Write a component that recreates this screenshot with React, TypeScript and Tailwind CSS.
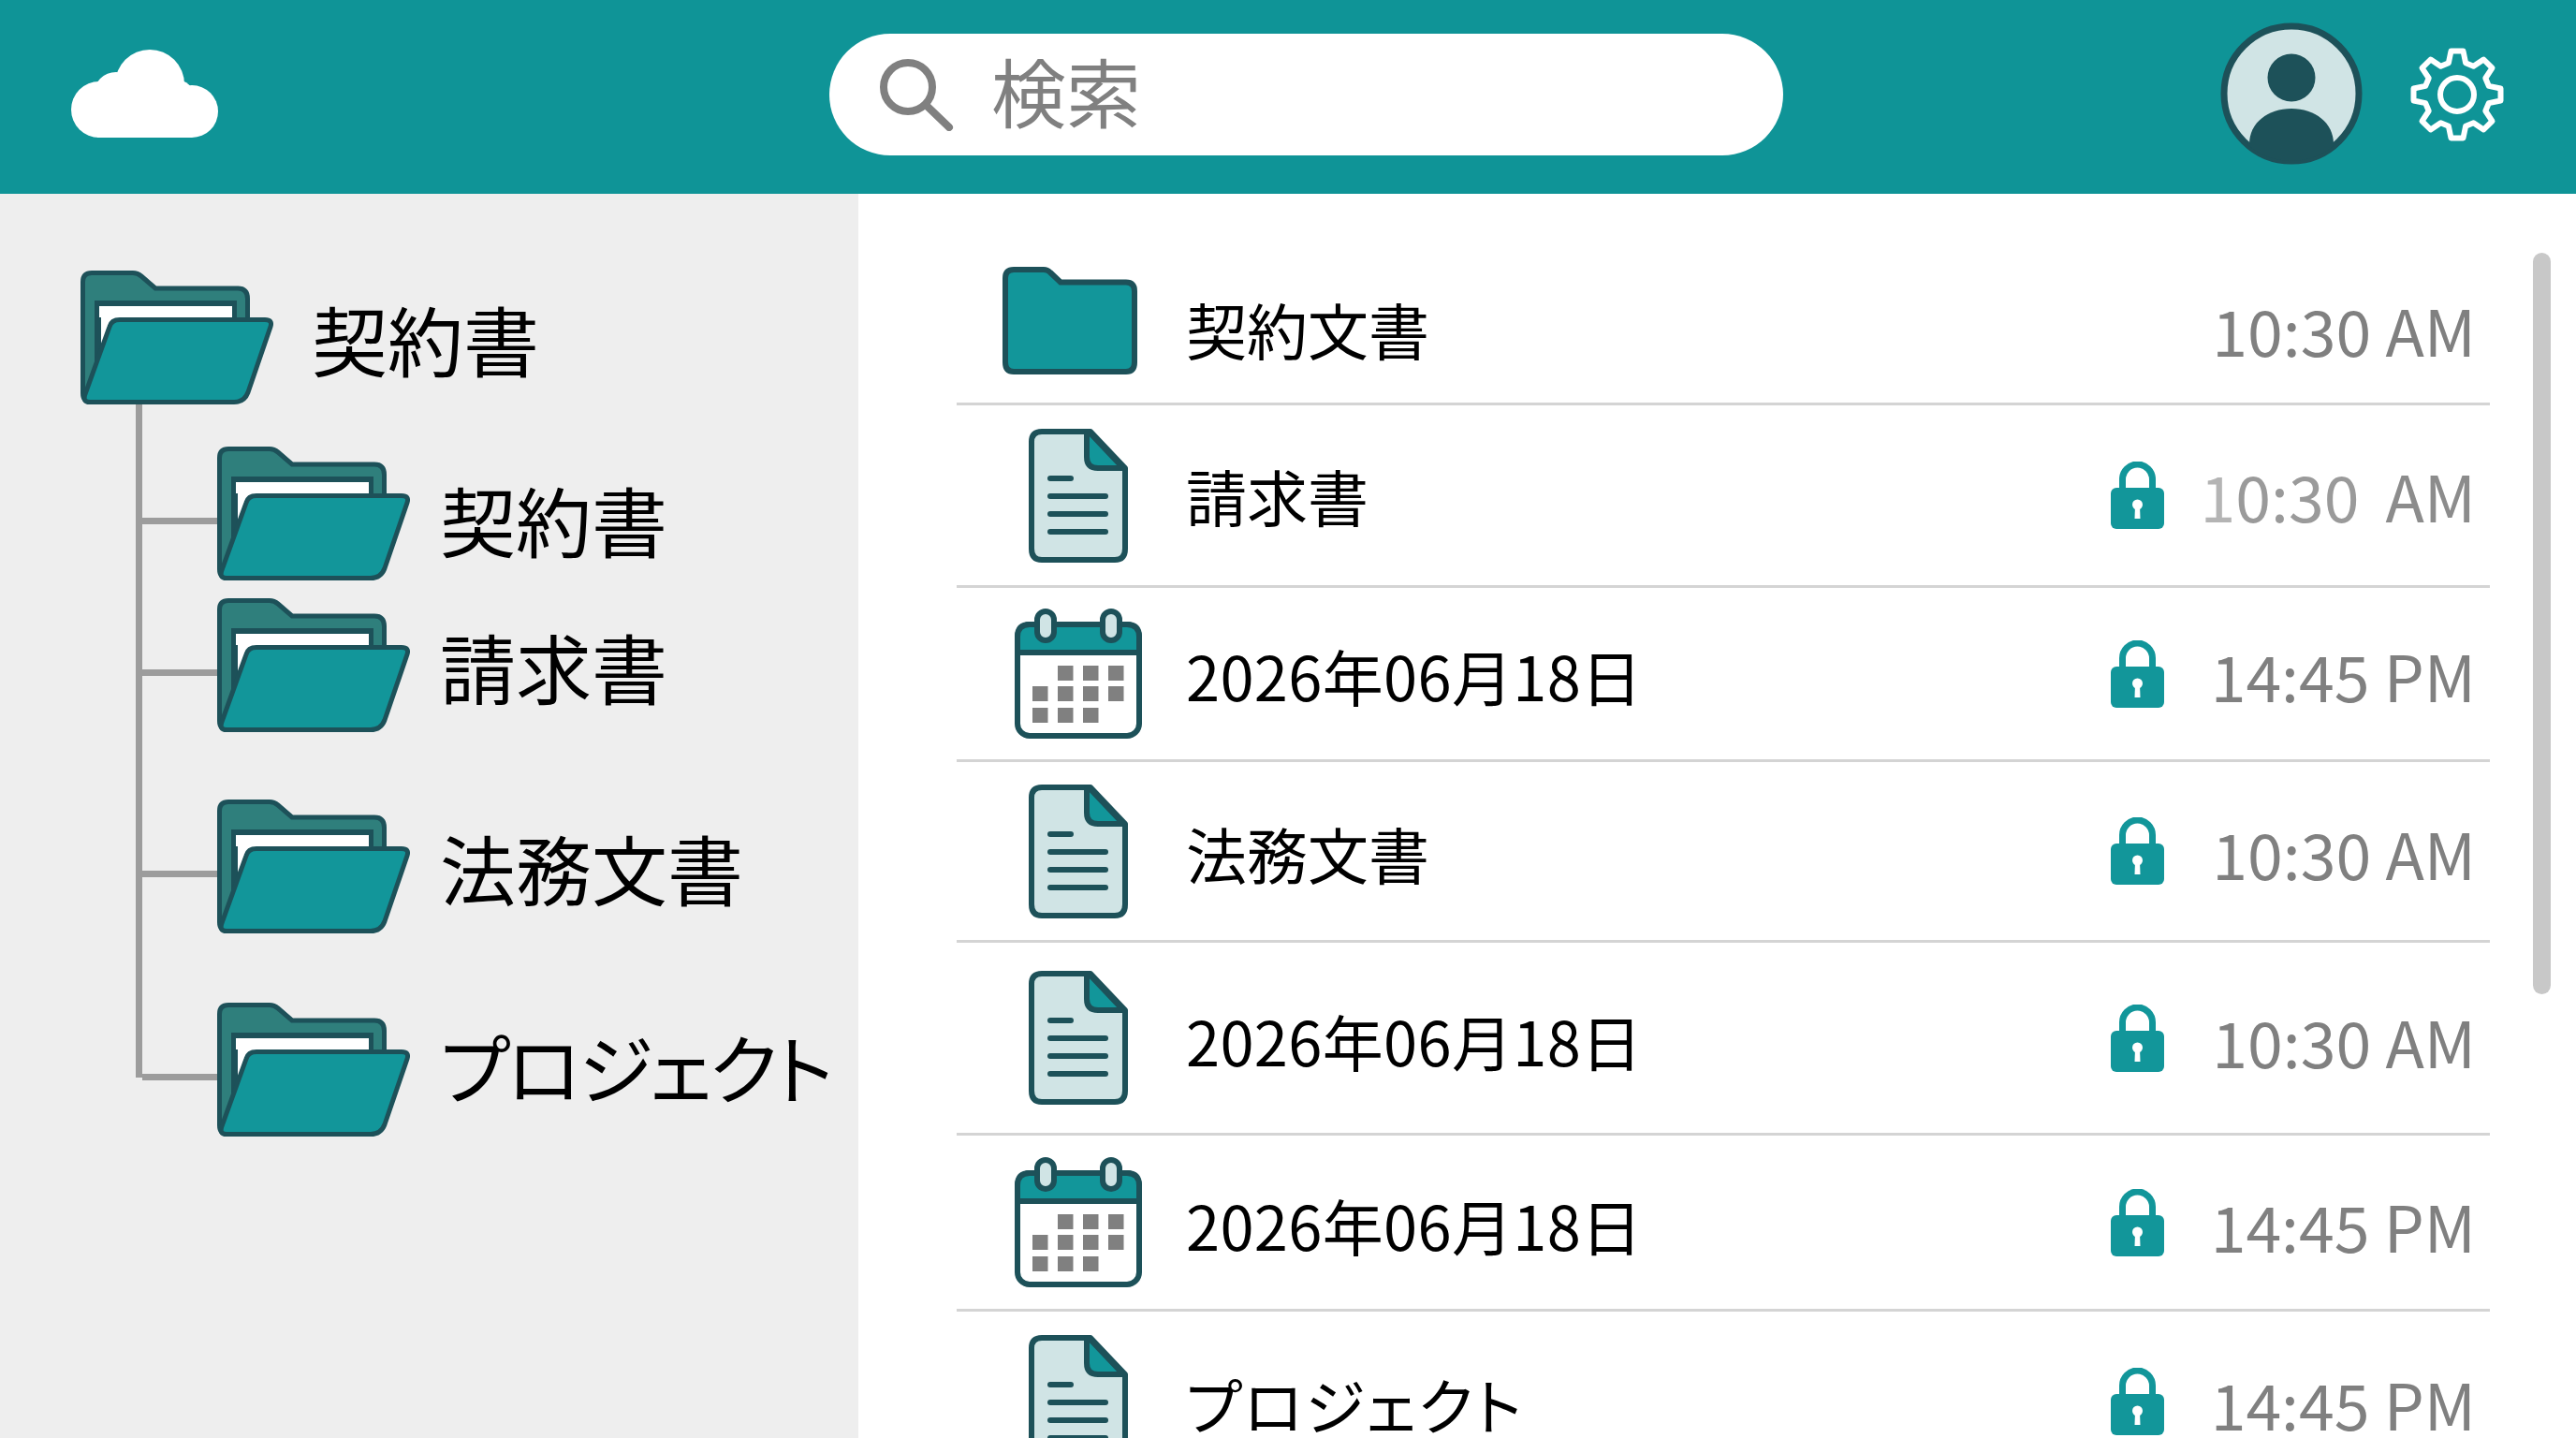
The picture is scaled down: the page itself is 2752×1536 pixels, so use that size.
import { ReactNode } from 'react';

const dark = '#1d5159';
const teal = '#12969a';
const pale = '#d0e4e5';

function gearPath() {
  const pts: string[] = [];
  const at = (deg: number, r: number) => {
    const a = (deg * Math.PI) / 180;
    return `${(50 + r * Math.cos(a)).toFixed(1)} ${(50 + r * Math.sin(a)).toFixed(1)}`;
  };
  for (let i = 0; i < 8; i++) {
    const c = i * 45;
    pts.push(at(c - 15, 35), at(c - 8, 47), at(c + 8, 47), at(c + 15, 35));
  }
  return `M${pts.join('L')}Z`;
}

function CloudLogo() {
  return (
    <svg width="157" height="94" viewBox="0 0 157 94" fill="#fff">
      <rect x="28" y="60" width="101" height="34" />
      <circle cx="30" cy="64" r="30" />
      <circle cx="129" cy="66" r="28" />
      <circle cx="84" cy="37" r="37" />
      <circle cx="48" cy="48" r="24" />
      <circle cx="112" cy="52" r="20" />
    </svg>
  );
}

function SearchGlyph() {
  return (
    <svg width="80" height="78" viewBox="0 0 80 78" fill="none" stroke="#808080" strokeWidth="8" strokeLinecap="round">
      <circle cx="31" cy="31" r="26" />
      <path d="M50 50L75 74" />
    </svg>
  );
}

function Avatar() {
  return (
    <svg width="152" height="152" viewBox="0 0 152 152">
      <defs>
        <clipPath id="avatar-clip">
          <circle cx="76" cy="76" r="72" />
        </clipPath>
      </defs>
      <circle cx="76" cy="76" r="72" fill={pale} stroke={dark} strokeWidth="7" />
      <circle cx="76" cy="59" r="25.5" fill={dark} />
      <g clipPath="url(#avatar-clip)">
        <path d="M31 152V130C31 107 51 92 76 92S121 107 121 130V152Z" fill={dark} />
        <path d="M20 122L34 134V152H20ZM132 122L118 134V152H132Z" fill={dark} />
      </g>
    </svg>
  );
}

function Gear() {
  return (
    <svg width="100" height="100" viewBox="0 0 100 100" fill="none" stroke="#fff" strokeWidth="6" strokeLinejoin="round">
      <path d={gearPath()} />
      <circle cx="50" cy="50" r="18" />
    </svg>
  );
}

function OpenFolder() {
  return (
    <svg width="206" height="143" viewBox="0 0 206 143" className="shrink-0">
      <path d="M2.5 12Q2.5 2.5 12 2.5H56Q61 2.5 65 6L80 19H168Q178.5 19 178.5 30V60H40L20 140.5H12Q2.5 140.5 2.5 131Z" fill="#2f7f7c" stroke={dark} strokeWidth="5" />
      <rect x="15" y="32" width="152" height="60" fill={dark} />
      <rect x="20" y="38" width="142" height="60" fill="#fff" />
      <path d="M15 50V120L22 100V50Z" fill={dark} />
      <path d="M42 52.5H197Q205.5 52.5 203 60L179 130Q175 140.5 164 140.5H10Q2 140.5 5 132L31 60Q33 52.5 42 52.5Z" fill={teal} stroke={dark} strokeWidth="5" strokeLinejoin="round" />
    </svg>
  );
}

function ClosedFolder() {
  return (
    <svg width="144" height="115" viewBox="0 0 144 115" className="-ml-[18px]">
      <path d="M3 12Q3 3 12 3H44Q48 3 51 6L62 16.5H132Q141 16.5 141 26V102Q141 112 132 112H12Q3 112 3 102Z" fill={teal} stroke={dark} strokeWidth="6" />
    </svg>
  );
}

function DocIcon() {
  return (
    <svg width="106" height="143" viewBox="0 0 106 143">
      <path d="M14 3H66L103 42V128Q103 140 92 140H14Q3 140 3 128V14Q3 3 14 3Z" fill={pale} stroke={dark} strokeWidth="6" strokeLinejoin="round" />
      <path d="M62 5V30Q62 42 74 42H101L66 5Z" fill={teal} stroke={dark} strokeWidth="6" strokeLinejoin="round" />
      <g stroke={dark} strokeWidth="6" strokeLinecap="round">
        <path d="M23 53H45" />
        <path d="M23 72H82" />
        <path d="M23 91H82" />
        <path d="M23 110H82" />
      </g>
    </svg>
  );
}

function CalendarIcon() {
  const cells = [
    [46, 61], [73, 61], [100, 61],
    [19, 83], [46, 83], [73, 83], [100, 83],
    [19, 106], [46, 106], [73, 106],
  ];
  return (
    <svg width="136" height="139" viewBox="0 0 136 139">
      <rect x="3" y="17" width="130" height="119" rx="13" fill="#fff" stroke={dark} strokeWidth="6" />
      <path d="M3 47V30Q3 17 16 17H120Q133 17 133 30V47Z" fill={teal} stroke={dark} strokeWidth="6" />
      <rect x="24" y="3" width="18" height="31" rx="9" fill={pale} stroke={dark} strokeWidth="6" />
      <rect x="94" y="3" width="18" height="31" rx="9" fill={pale} stroke={dark} strokeWidth="6" />
      {cells.map(([x, y]) => (
        <rect key={`${x}-${y}`} x={x} y={y} width="16.5" height="16" fill="#808080" />
      ))}
    </svg>
  );
}

function Lock() {
  return (
    <svg width="57" height="72" viewBox="0 0 57 72" className="shrink-0">
      <path d="M12.5 32V19A16 16 0 0 1 44.5 19V32" fill="none" stroke={teal} strokeWidth="7" />
      <rect x="0" y="28" width="57" height="44" rx="6" fill={teal} />
      <circle cx="28.5" cy="46" r="5.5" fill="#fff" />
      <path d="M26 47H31L31.5 61H25.5Z" fill="#fff" />
    </svg>
  );
}

function TreeNode({ label, className, labelClass }: { label: string; className: string; labelClass: string }) {
  return (
    <div className={`flex items-center ${className}`}>
      <div className="mt-[16px] h-[7px] w-[80px] shrink-0 bg-[#9c9c9c]" />
      <OpenFolder />
      <span className={`ml-[32px] whitespace-nowrap text-[81px] leading-none text-black [font-feature-settings:'palt'] ${labelClass}`}>{label}</span>
    </div>
  );
}

type RowData = {
  icon: ReactNode;
  label: string;
  time: ReactNode;
  locked: boolean;
  height: string;
  labelClass: string;
  nudge: string;
};

const rows: RowData[] = [
  { icon: <ClosedFolder />, label: '契約文書', time: '10:30 AM', locked: false, height: 'h-[178px]', labelClass: '', nudge: 'pt-[18px]' },
  {
    icon: <DocIcon />,
    label: '請求書',
    time: (
      <>
        <span className="text-[#b4b4b4]">1</span>
        <span className="text-[#9a9a9a]">0:30</span>
        <span className="ml-[28px] text-[#8c8c8c]">AM</span>
      </>
    ),
    locked: true,
    height: 'h-[195px]',
    labelClass: '',
    nudge: '',
  },
  { icon: <CalendarIcon />, label: '2026年06月18日', time: '14:45 PM', locked: true, height: 'h-[186px]', labelClass: 'tracking-[0.35px]', nudge: 'pt-[3px]' },
  { icon: <DocIcon />, label: '法務文書', time: '10:30 AM', locked: true, height: 'h-[193px]', labelClass: '', nudge: 'pt-[4px]' },
  { icon: <DocIcon />, label: '2026年06月18日', time: '10:30 AM', locked: true, height: 'h-[206px]', labelClass: 'tracking-[0.35px]', nudge: 'pt-[6px]' },
  { icon: <CalendarIcon />, label: '2026年06月18日', time: '14:45 PM', locked: true, height: 'h-[188px]', labelClass: 'tracking-[0.35px]', nudge: 'pt-[6px]' },
  { icon: <DocIcon />, label: 'プロジェクト', time: '14:45 PM', locked: true, height: 'h-[195px]', labelClass: 'tracking-[2px]', nudge: 'pt-[4px]' },
];

export default function App() {
  return (
    <div className="flex h-screen w-screen flex-col overflow-hidden bg-white font-['Noto_Sans_CJK_JP',sans-serif]">
      {/* Header */}
      <header className="flex h-[207px] shrink-0 items-center bg-[#0f9497] pb-[5px] pl-[76px]">
        <div className="mb-[3px]">
          <CloudLogo />
        </div>
        <div className="ml-[653px] flex h-[130px] w-[1019px] items-center rounded-full bg-white pl-[53px]">
          <SearchGlyph />
          <span className="mb-[12px] ml-[40px] text-[80px] leading-none text-[#808080]">検索</span>
        </div>
        <div className="mb-[2px] ml-[467px]">
          <Avatar />
        </div>
        <div className="ml-[51px]">
          <Gear />
        </div>
      </header>

      <div className="flex min-h-0 flex-1">
        {/* Folder tree */}
        <aside className="w-[917px] shrink-0 bg-[#eeeeee] pl-[86px] pt-[82px]">
          <div className="flex items-center">
            <OpenFolder />
            <span className="ml-[41px] text-[81px] leading-none text-black">契約書</span>
          </div>
          <div className="ml-[59px] flex h-[719px] flex-col border-l-[7px] border-[#9c9c9c]">
            <TreeNode label="契約書" className="mt-[45px]" labelClass="mt-[10px]" />
            <TreeNode label="請求書" className="mt-[19px]" labelClass="" />
            <TreeNode label="法務文書" className="mt-[72px]" labelClass="" />
            <TreeNode label="プロジェクト" className="mt-[74px]" labelClass="mb-[10px] -tracking-[2.8px]" />
          </div>
        </aside>

        {/* File list */}
        <main className="relative min-w-0 flex-1 pl-[105px] pr-[92px] pt-[48px]">
          {rows.map((row, i) => (
            <div key={i} className={`flex items-center border-b-[3px] border-[#d4d4d4] ${row.height}`}>
              <div className="flex w-[245px] shrink-0 justify-center pl-[14px]">{row.icon}</div>
              <span className={`flex-1 whitespace-nowrap text-[65px] leading-none text-black [font-feature-settings:'palt'] ${row.labelClass} ${row.nudge}`}>{row.label}</span>
              {row.locked && <Lock />}
              <span className={`w-[333px] shrink-0 whitespace-nowrap text-right text-[68px] leading-none text-[#808080] ${row.nudge}`}>{row.time}</span>
              <div className="w-[15px] shrink-0" />
            </div>
          ))}
          <div className="absolute right-[27px] top-[63px] h-[792px] w-[19px] rounded-full bg-[#c8c8c8]" />
        </main>
      </div>
    </div>
  );
}
